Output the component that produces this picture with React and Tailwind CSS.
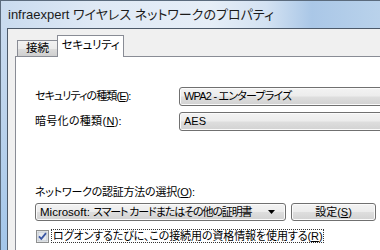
export default function App() {
  const combo =
    "rounded-[3px] border border-[#707070] bg-[linear-gradient(180deg,#f3f3f3_0%,#ececec_48%,#dedede_52%,#d2d2d2_100%)] shadow-[inset_0_0_0_1px_#fbfbfb]";
  return (
    <div className="w-[380px] h-[250px] overflow-hidden flex flex-col border-t border-l border-[#5b6b7d] bg-[#c4d7ed] text-black [font-family:'Liberation_Sans','Noto_Sans_CJK_JP',sans-serif] [font-feature-settings:'palt']">
      {/* title bar */}
      <div className="h-[27px] shrink-0 flex items-center pl-[7px] bg-[linear-gradient(90deg,#c9dbef_0%,#dfe9f5_25%,#e6eef7_55%,#d3e2f2_70%,#aac7e7_82%,#b9d2eb_100%)]">
        <span className="text-[13px] leading-none text-[#1b1b1b]">
          infraexpert ワイヤレス ネットワークのプロパティ
        </span>
      </div>
      <div className="flex-1 flex min-h-0">
        <div className="w-[6px] shrink-0 bg-[linear-gradient(180deg,#c8daef_0%,#bcd3ec_40%,#a3c6ea_100%)]" />
        <div className="flex-1 min-w-0 bg-[#f0f0f0] border-t border-l border-[#4c5969] pl-[7px] flex flex-col">
          {/* tabs */}
          <div className="h-[27px] shrink-0 flex items-end text-[11.5px]">
            <div className="ml-[2px] w-[41px] h-[16px] border-t border-l border-r border-[#898c95] bg-[linear-gradient(180deg,#f2f2f2_0%,#ebebeb_50%,#dddddd_51%,#cfcfcf_100%)] flex items-center justify-center leading-none">
              接続
            </div>
            <div className="relative z-10 -ml-px -mb-px w-[67px] h-[22px] border-t border-l border-r border-[#898c95] bg-white flex items-center justify-center leading-none pb-[2px] tracking-[-0.3px]">
              セキュリティ
            </div>
          </div>
          {/* panel */}
          <div className="flex-1 w-[420px] border-t border-l border-[#898c95] bg-white pl-[19px] flex flex-col text-[11px] leading-[13px]">
            <div className="mt-[30px] flex items-center h-[19px]">
              <div className="w-[144px] shrink-0 tracking-[-0.9px]">
                セキュリティの種類(<u>E</u>):
              </div>
              <div className={"flex-1 h-[19px] flex items-center pl-[4px] tracking-[-0.8px] " + combo}>
                WPA2 - エンタープライズ
              </div>
            </div>
            <div className="mt-[6px] flex items-center h-[19px]">
              <div className="w-[144px] shrink-0 tracking-[0.3px]">
                暗号化の種類(<u>N</u>):
              </div>
              <div className={"flex-1 h-[19px] flex items-center pl-[4px] " + combo}>
                AES
              </div>
            </div>
            <div className="mt-[55px] tracking-[-0.25px]">
              ネットワークの認証方法の選択(<u>O</u>):
            </div>
            <div className="mt-[4px] flex items-center gap-[5px]">
              <div className={"w-[251px] h-[18px] flex items-center pl-[4px] pr-[10px] " + combo}>
                <span className="flex-1 whitespace-nowrap">
                  <span className="text-[11.5px]">Microsoft: </span>
                  <span className="tracking-[-1.1px]">スマート カードまたはその他の証明書</span>
                </span>
                <svg width="7" height="4" viewBox="0 0 7 4">
                  <path d="M0 0H7L3.5 4Z" fill="#000" />
                </svg>
              </div>
              <div className={"w-[85px] h-[18px] flex items-center justify-center " + combo}>
                設定(<u>S</u>)
              </div>
            </div>
            <div className="mt-[8px] flex items-center">
              <svg width="13" height="13" viewBox="0 0 13 13" className="ml-[1px] shrink-0">
                <rect x="0.5" y="0.5" width="12" height="12" fill="#f4f4f4" stroke="#8e8f8f" />
                <rect x="2" y="2" width="9" height="9" fill="#e6e9ee" stroke="#b9c0c9" strokeWidth="0.8" />
                <path d="M3 6.3L5.3 8.8L10 3.2" fill="none" stroke="#3a56a3" strokeWidth="1.8" />
              </svg>
              <div className="ml-[2px] px-[1px] border border-dotted border-[#333] leading-[12px] tracking-[-0.1px]">
                ログオンするたびに、この接続用の資格情報を使用する(<u>R</u>)
              </div>
            </div>
          </div>
        </div>
      </div>
    </div>
  );
}
